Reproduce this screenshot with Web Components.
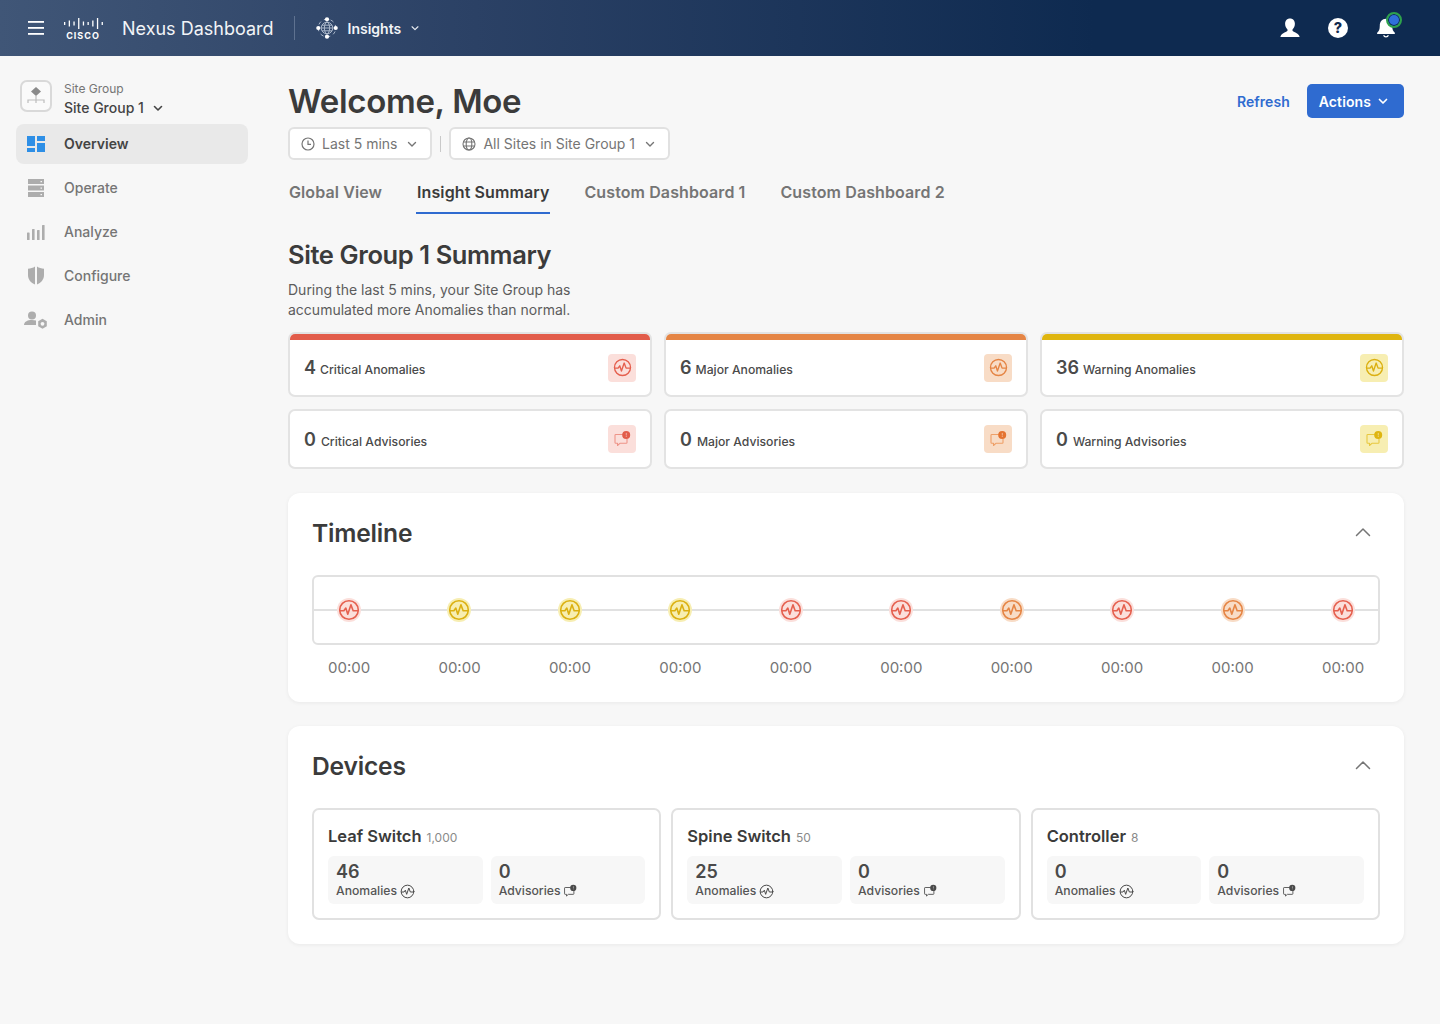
<!DOCTYPE html>
<html lang="en">
<head>
<meta charset="utf-8">
<title>Nexus Dashboard</title>
<style>
  html, body { margin: 0; padding: 0; }
  body {
    width: 1440px;
    min-height: 1024px;
    background: #f7f7f7;
    font-family: Inter, "Liberation Sans", sans-serif;
    color: #444;
  }
  .shell { display: flex; align-items: flex-start; }
</style>
</head>
<body>
<nx-topbar></nx-topbar>
<div class="shell">
  <nx-sidebar></nx-sidebar>
  <nx-main></nx-main>
</div>

<script>
const chevron = (size, color, sw = 1.6) => `<svg width="${size}" height="${size}" viewBox="0 0 12 12" fill="none" stroke="${color}" stroke-width="${sw}" stroke-linecap="round" stroke-linejoin="round"><path d="M2.5 4.5 6 8l3.5-3.5"/></svg>`;

const anomalyIcon = (size, color, fill = 'none', sw = 1.5) => `<svg width="${size}" height="${size}" viewBox="0 0 18 18" fill="${fill}" stroke="${color}" stroke-width="${sw}" stroke-linejoin="round" stroke-linecap="round"><circle cx="9" cy="9" r="7.6"/><path d="M1.6 9.6H4.800L6.400 7.400 8 12.400 10.600 4.800 12.400 9.600H16.400"/></svg>`;

const advisoryIcon = (size, color, dot) => `<svg width="${size}" height="${size}" viewBox="0 0 18 18" fill="none"><path d="M10 4.5H2.800a.8.8 0 0 0-.8.8v7.200a.8.8 0 0 0 .8.8h1.700v2.200l2.400-2.200h6.300a.8.8 0 0 0 .8-.8V9" stroke="${color}" stroke-width="1.100" stroke-linejoin="round"/><circle cx="13.200" cy="5" r="4" fill="${dot}"/><rect x="12.800" y="2.900" width=".9" height="2.600" fill="#fff" opacity=".55"/><rect x="12.800" y="6" width=".9" height=".9" fill="#fff" opacity=".55"/></svg>`;

class NxTopbar extends HTMLElement {
  constructor() {
    super();
    this.attachShadow({ mode: 'open' });
    const heights = [3, 6, 4, 11, 4, 3, 6, 11, 3];
    const bars = heights.map((h, i) => `<rect x="${i * 4.7}" y="${5.5 - h / 2}" width="1.300" height="${h}"/>`).join('');
    this.shadowRoot.innerHTML = `
      <style>
        :host {
          display: flex;
          align-items: center;
          height: 56px;
          background: linear-gradient(90deg, #405677 0%, #2b4165 33%, #0e2a50 76%);
          color: #fff;
          font-family: Inter, "Liberation Sans", sans-serif;
        }
        .menu { margin-left: 28px; display: flex; }
        .logo { margin-left: 20px; display: flex; flex-direction: column; align-items: center; width: 38px; padding-top: 2px; }
        .logo svg { display: block; }
        .logo span { font-size: 9px; font-weight: 700; letter-spacing: 1px; line-height: 10px; margin-top: 2px; }
        .name { margin-left: 20px; font-size: 18px; font-weight: 400; color: #f2f4f7; }
        .sep { width: 1px; height: 24px; margin-left: 20px; background: #5f7290; }
        .app { margin-left: 21px; display: flex; align-items: center; }
        .app b { margin-left: 10px; font-size: 14px; font-weight: 600; color: #f2f4f7; }
        .app svg:last-child { margin-left: 9px; }
        .right { margin-left: auto; margin-right: 42px; display: flex; align-items: center; gap: 24px; }
        .right svg { display: block; }
        .bell { position: relative; display: flex; }
        .bell i {
          position: absolute; left: 12px; top: -4px;
          width: 16px; height: 16px; box-sizing: border-box; border-radius: 50%;
          background: #2f6fdb; border: 2.500px solid #2ea24c;
          box-shadow: inset 0 0 0 1px #0e2a50;
        }
      </style>
      <span class="menu"><svg width="16" height="14" viewBox="0 0 16 14" fill="#fff"><rect y="0" width="16" height="1.800"/><rect y="6" width="16" height="1.800"/><rect y="12" width="16" height="1.800"/></svg></span>
      <div class="logo">
        <svg width="39" height="11" viewBox="0 0 39 11" fill="#fff">${bars}</svg>
        <span>CISCO</span>
      </div>
      <span class="name">Nexus Dashboard</span>
      <span class="sep"></span>
      <div class="app">
        <svg width="22" height="22" viewBox="0 0 22 22" fill="none" stroke="#a9b6c9" stroke-width="1">
          <circle cx="11" cy="11" r="8.800" stroke-dasharray="3.500 3.400" stroke-dashoffset="-3.500"/>
          <circle cx="11" cy="11" r="5.800"/><ellipse cx="11" cy="11" rx="2.600" ry="5.800"/><path d="M5.200 11h11.600M6 8.200h10M6 13.800h10"/>
          <g fill="#fff" stroke="none"><circle cx="11" cy="2.300" r="2.100"/><circle cx="11" cy="19.700" r="2.100"/><circle cx="2.300" cy="11" r="2.100"/><circle cx="19.700" cy="11" r="2.100"/></g>
        </svg>
        <b>Insights</b>
        ${chevron(10, '#e8ecf2', 1.400)}
      </div>
      <div class="right">
        <svg width="24" height="24" viewBox="0 0 24 24" fill="#fff"><path d="M12 2.500c3 0 4.900 2.200 4.900 5.300 0 2.400-1 4.400-2.400 5.700v1.300c0 .7 5.600 2.300 7 5.400.2.400 0 .8-.5.8H3c-.5 0-.7-.4-.5-.8 1.400-3.100 7-4.700 7-5.400v-1.300C8.100 12.200 7.100 10.200 7.100 7.800c0-3.100 1.900-5.300 4.900-5.300z"/></svg>
        <svg width="24" height="24" viewBox="0 0 24 24"><circle cx="12" cy="12" r="10" fill="#fff"/><text x="12" y="17" text-anchor="middle" font-family="Inter, sans-serif" font-size="14.500" font-weight="800" fill="#12294d">?</text></svg>
        <span class="bell">
          <svg width="24" height="24" viewBox="0 0 24 24" fill="#fff"><path d="M12 2.800c4 0 6.200 3 6.200 6.800 0 4.100 1 5.900 2.600 7.200.5.400.2 1.200-.5 1.200H3.700c-.7 0-1-.8-.5-1.200 1.600-1.300 2.600-3.100 2.600-7.200C5.800 5.800 8 2.800 12 2.800z"/><path d="M9 19.200h1.500a1.600 1.600 0 0 0 3 0H15a3.100 3.100 0 0 1-6 0z"/></svg>
          <i></i>
        </span>
      </div>
    `;
  }
}
customElements.define('nx-topbar', NxTopbar);

class NxSideItem extends HTMLElement {
  constructor() {
    super();
    this.attachShadow({ mode: 'open' });
    this.shadowRoot.innerHTML = `
      <style>
        :host {
          display: flex;
          align-items: center;
          height: 40px;
          box-sizing: border-box;
          padding-bottom: 1px;
          border-radius: 8px;
          font-size: 14px;
          font-weight: 500;
          color: #757575;
        }
        :host([active]) { background: #e9e9e9; color: #444; font-weight: 600; }
        .ico { width: 40px; margin-right: 8px; display: flex; justify-content: center; }
      </style>
      <span class="ico"><slot name="icon"></slot></span>
      <slot></slot>
    `;
  }
}
customElements.define('nx-side-item', NxSideItem);

class NxSidebar extends HTMLElement {
  constructor() {
    super();
    this.attachShadow({ mode: 'open' });
    this.shadowRoot.innerHTML = `
      <style>
        :host {
          display: block;
          width: 232px;
          flex: none;
          padding: 24px 0 0 16px;
          margin-right: 40px;
          font-family: Inter, "Liberation Sans", sans-serif;
        }
        .group { display: flex; align-items: flex-start; height: 44px; }
        .box {
          margin-left: 4px; width: 32px; height: 32px; box-sizing: border-box;
          border: 2px solid #d9d9d9; border-radius: 7px; background: #fafafa;
          display: flex; align-items: center; justify-content: center;
        }
        .text { margin: 0 0 0 12px; }
        .small { font-size: 12px; line-height: 18px; color: #757575; }
        .big { font-size: 14px; line-height: 20px; font-weight: 500; color: #444; display: flex; align-items: center; gap: 8px; }
        nav { display: flex; flex-direction: column; gap: 4px; }
        svg { display: block; }
      </style>
      <div class="group">
        <span class="box">
          <svg width="22" height="22" viewBox="0 0 22 22" fill="none"><path d="M11 2 16 6.500 11 11 6 6.500z" fill="#8a8a8a"/><path d="M11 11v7M3 18v-3h16v3" stroke="#bdbdbd" stroke-width="1.200"/></svg>
        </span>
        <div class="text">
          <div class="small">Site Group</div>
          <div class="big">Site Group 1 ${chevron(12, '#444', 1.600)}</div>
        </div>
      </div>
      <nav>
        <nx-side-item active>
          <svg slot="icon" width="18" height="16" viewBox="0 0 18 16" fill="#2e8fe6"><rect width="8" height="10"/><rect y="12" width="8" height="4"/><rect x="10" width="8" height="5"/><rect x="10" y="7" width="8" height="9"/></svg>
          Overview
        </nx-side-item>
        <nx-side-item>
          <svg slot="icon" width="16" height="18" viewBox="0 0 16 18" fill="#adadad"><rect width="16" height="5"/><rect y="6.500" width="16" height="5"/><rect y="13" width="16" height="5"/><g fill="#f7f7f7"><rect x="12.500" y="2" width="1.500" height="1.200"/><rect x="12.500" y="8.500" width="1.500" height="1.200"/><rect x="12.500" y="15" width="1.500" height="1.200"/></g></svg>
          Operate
        </nx-side-item>
        <nx-side-item>
          <svg slot="icon" width="18" height="16" viewBox="0 0 18 16" fill="#adadad"><rect y="8.500" width="2.600" height="7.500" rx=".6"/><rect x="5" y="5" width="2.600" height="11" rx=".6"/><rect x="10" y="6" width="2.600" height="10" rx=".6"/><rect x="15" y="1" width="2.600" height="15" rx=".6"/></svg>
          Analyze
        </nx-side-item>
        <nx-side-item>
          <svg slot="icon" width="16" height="19" viewBox="0 0 16 19" fill="#adadad"><path d="M7 .5v18C3 17 0 13.500 0 9V2.800C2.500 2.600 5 1.800 7 .5zM9 .5c2 1.300 4.500 2.100 7 2.300V9c0 4.500-3 8-7 9.500z"/></svg>
          Configure
        </nx-side-item>
        <nx-side-item>
          <svg slot="icon" width="24" height="18" viewBox="0 0 24 18" fill="#adadad"><circle cx="8" cy="4.500" r="4"/><path d="M0 14c0-3 3-5 8-5 1.500 0 2.800.2 4 .6V14z"/><path d="M18.500 7.800l4.300 2.500v4.900l-4.300 2.500-4.300-2.500v-4.900z"/><circle cx="18.500" cy="12.800" r="1.900" fill="#f7f7f7"/></svg>
          Admin
        </nx-side-item>
      </nav>
    `;
  }
}
customElements.define('nx-sidebar', NxSidebar);

class NxSelect extends HTMLElement {
  constructor() {
    super();
    this.attachShadow({ mode: 'open' });
    this.shadowRoot.innerHTML = `
      <style>
        :host {
          display: inline-flex;
          align-items: center;
          height: 33px;
          box-sizing: border-box;
          padding: 0 12px 0 11px;
          background: #fff;
          border: 2px solid #e1e1e1;
          border-radius: 6px;
          font-size: 14px;
          color: #757575;
        }
        .ico { display: flex; margin-right: 7px; }
        .arrow { display: flex; margin-left: 9px; }
      </style>
      <span class="ico"><slot name="icon"></slot></span>
      <slot></slot>
      <span class="arrow">${chevron(12, '#757575', 1.400)}</span>
    `;
  }
}
customElements.define('nx-select', NxSelect);

class NxTabs extends HTMLElement {
  constructor() {
    super();
    this.attachShadow({ mode: 'open' });
    const active = this.getAttribute('active');
    const tabs = (this.getAttribute('tabs') || '').split('|');
    this.shadowRoot.innerHTML = `
      <style>
        :host { display: flex; gap: 35px; margin-top: 14px; padding-left: 1px; }
        span {
          display: block; height: 40px; line-height: 37px; box-sizing: border-box;
          font-size: 16px; font-weight: 600; color: #757575; white-space: nowrap; letter-spacing: .1px;
        }
        span.on { color: #3b3b3b; border-bottom: 2px solid #2f6bd0; padding: 0 1px; margin: 0 -1px; }
      </style>
      ${tabs.map(t => `<span class="${t === active ? 'on' : ''}">${t}</span>`).join('')}
    `;
  }
}
customElements.define('nx-tabs', NxTabs);

const TONES = {
  critical: { bar: '#e25c4a', tile: '#fbdfdb', line: '#e5604f', dot: '#e25c4a', soft: '#ee9488', halo: '#fbdfdb' },
  major: { bar: '#e58545', tile: '#f8dcc6', line: '#e58545', dot: '#e5732f', soft: '#ee9f67', halo: '#f8dcc6' },
  warning: { bar: '#dfb50f', tile: '#f7eeb2', line: '#dbb011', dot: '#dfb50f', soft: '#e8c83f', halo: '#f7eeb2' }
};

class NxStatCard extends HTMLElement {
  constructor() {
    super();
    this.attachShadow({ mode: 'open' });
    const tone = TONES[this.getAttribute('tone')];
    const isAnomaly = this.getAttribute('kind') === 'anomaly';
    this.shadowRoot.innerHTML = `
      <style>
        :host {
          display: flex;
          align-items: center;
          box-sizing: border-box;
          height: ${isAnomaly ? 65 : 60}px;
          background: #fff;
          border: 2px solid #e3e3e3;
          border-radius: 7px;
          overflow: hidden;
          padding: ${isAnomaly ? '6px' : '0'} 14px 0 14px;
          position: relative;
        }
        .bar { position: absolute; left: 0; right: 0; top: 0; height: 6px; background: ${tone.bar}; }
        .num { font-size: 18px; font-weight: 600; color: #4a4a4a; margin-right: ${isAnomaly ? 4 : 5}px; }
        .label { font-size: 12.200px; font-weight: 500; color: #4a4a4a; padding-top: 4px; }
        .tile {
          margin-left: auto; width: 28px; height: 28px; border-radius: 4px;
          background: ${tone.tile}; display: flex; align-items: center; justify-content: center;
        }
      </style>
      ${isAnomaly ? '<span class="bar"></span>' : ''}
      <span class="num">${this.getAttribute('value')}</span>
      <span class="label"><slot></slot></span>
      <span class="tile">${isAnomaly ? anomalyIcon(19, tone.line, 'none', 1.300) : advisoryIcon(18, tone.soft, tone.dot)}</span>
    `;
  }
}
customElements.define('nx-stat-card', NxStatCard);

class NxPanel extends HTMLElement {
  constructor() {
    super();
    this.attachShadow({ mode: 'open' });
    this.shadowRoot.innerHTML = `
      <style>
        :host {
          display: block;
          box-sizing: border-box;
          background: #fff;
          border-radius: 12px;
          box-shadow: 0 1px 4px rgba(0, 0, 0, .06);
          padding: 24px;
        }
        header { display: flex; align-items: center; justify-content: space-between; height: 32px; margin-bottom: 26px; }
        h2 { margin: 0; font-size: 24.600px; font-weight: 600; color: #3b3b3b; letter-spacing: -.2px; }
        svg { display: block; margin: -2px 9px 0 0; }
      </style>
      <header>
        <h2>${this.getAttribute('heading')}</h2>
        <svg width="16" height="10" viewBox="0 0 16 10" fill="none" stroke="#757575" stroke-width="1.500" stroke-linecap="round" stroke-linejoin="round"><path d="M1.500 8.500 8 2l6.500 6.500"/></svg>
      </header>
      <slot></slot>
    `;
  }
}
customElements.define('nx-panel', NxPanel);

class NxTimeline extends HTMLElement {
  constructor() {
    super();
    this.attachShadow({ mode: 'open' });
    const tones = this.getAttribute('tones').split(',');
    this.shadowRoot.innerHTML = `
      <style>
        :host { display: block; }
        .track {
          position: relative;
          display: flex; justify-content: space-between; align-items: center;
          height: 70px; box-sizing: border-box; padding: 0 14px;
          border: 2px solid #e1e1e1; border-radius: 6px;
        }
        .track::before {
          content: ''; position: absolute; left: 0; right: 0; top: 32px; height: 2px; background: #e1e1e1;
        }
        .slot { position: relative; width: 42px; display: flex; justify-content: center; }
        .node {
          width: 24px; height: 24px; border-radius: 50%;
          display: flex; align-items: center; justify-content: center;
        }
        .labels { display: flex; justify-content: space-between; padding: 13px 16px 0; }
        .labels span { width: 42px; text-align: center; font-size: 15px; line-height: 20px; color: #757575; white-space: nowrap; }
      </style>
      <div class="track">
        ${tones.map(t => `<span class="slot"><span class="node" style="background:${TONES[t].halo}">${anomalyIcon(22, TONES[t].line, 'none', 1.300)}</span></span>`).join('')}
      </div>
      <div class="labels">${tones.map(() => '<span>00:00</span>').join('')}</div>
    `;
  }
}
customElements.define('nx-timeline', NxTimeline);

class NxDeviceCard extends HTMLElement {
  constructor() {
    super();
    this.attachShadow({ mode: 'open' });
    const a = this.getAttribute('anomalies');
    const b = this.getAttribute('advisories');
    this.shadowRoot.innerHTML = `
      <style>
        :host {
          display: block;
          box-sizing: border-box;
          height: 112px;
          padding: 14px;
          border: 2px solid #e1e1e1;
          border-radius: 7px;
          background: #fff;
        }
        .head { height: 24px; display: flex; align-items: baseline; gap: 5px; line-height: 24px; color: #3b3b3b; }
        .head b { font-size: 16.500px; font-weight: 600; }
        .head span { font-size: 12px; color: #8a8a8a; }
        .tiles { display: grid; grid-template-columns: 1fr 1fr; gap: 8px; margin-top: 8px; }
        .tile { height: 48px; box-sizing: border-box; background: #f7f7f7; border-radius: 6px; padding: 5px 8px 0; }
        .n { font-size: 18px; font-weight: 600; line-height: 22px; color: #4a4a4a; }
        .l { display: flex; align-items: center; gap: 3px; font-size: 12.200px; line-height: 16px; font-weight: 500; color: #555; }
        .l svg { display: block; }
      </style>
      <div class="head"><b>${this.getAttribute('name')}</b><span>${this.getAttribute('count')}</span></div>
      <div class="tiles">
        <div class="tile"><div class="n">${a}</div><div class="l">Anomalies ${anomalyIcon(15, '#4a4a4a', 'none', 1.200)}</div></div>
        <div class="tile"><div class="n">${b}</div><div class="l">Advisories ${advisoryIcon(14, '#4a4a4a', '#4a4a4a')}</div></div>
      </div>
    `;
  }
}
customElements.define('nx-device-card', NxDeviceCard);

class NxMain extends HTMLElement {
  constructor() {
    super();
    this.attachShadow({ mode: 'open' });
    this.shadowRoot.innerHTML = `
      <style>
        :host {
          display: block;
          width: 1116px;
          flex: none;
          padding-top: 28px;
          font-family: Inter, "Liberation Sans", sans-serif;
          color: #444;
        }
        .top { display: flex; align-items: flex-start; justify-content: space-between; height: 43px; }
        h1 { margin: -1px 0 0; font-size: 33px; line-height: 36px; font-weight: 600; color: #3b3b3b; letter-spacing: -.3px; }
        .actions { display: flex; align-items: center; gap: 17px; }
        .refresh { font-size: 14px; font-weight: 600; color: #2f6bd0; letter-spacing: .05px; }
        .btn {
          height: 34px; box-sizing: border-box; padding: 0 15px 0 12px;
          display: flex; align-items: center; gap: 6px; letter-spacing: .1px;
          background: #2f6bd0; border-radius: 5px; color: #fff; font-size: 14px; font-weight: 600;
        }
        .filters { display: flex; align-items: center; }
        .filters i { width: 1px; height: 16px; background: #c9c9c9; margin: 0 8px; }
        svg { display: block; }
        h3 { margin: 23px 0 0; font-size: 25.500px; line-height: 36px; font-weight: 600; color: #3b3b3b; letter-spacing: -.4px; }
        p { margin: 7px 0 0; font-size: 14px; line-height: 20px; color: #5c5c5c; }
        .stats { display: grid; grid-template-columns: repeat(3, 1fr); gap: 12px; margin-top: 12px; }
        .timeline { margin-top: 24px; height: 209px; }
        .devices { margin-top: 24px; height: 218px; }
        .device-row { display: grid; grid-template-columns: repeat(3, 1fr); gap: 10px; }
      </style>
      <div class="top">
        <h1>Welcome, Moe</h1>
        <div class="actions">
          <span class="refresh">Refresh</span>
          <span class="btn">Actions ${chevron(12, '#fff', 1.700)}</span>
        </div>
      </div>
      <div class="filters">
        <nx-select>
          <svg slot="icon" width="14" height="14" viewBox="0 0 14 14" fill="none" stroke="#757575" stroke-width="1.200"><circle cx="7" cy="7" r="6"/><path d="M7 3.500V7.300H10"/></svg>
          Last 5 mins
        </nx-select>
        <i></i>
        <nx-select>
          <svg slot="icon" width="14" height="14" viewBox="0 0 14 14" fill="none" stroke="#757575" stroke-width="1.100"><circle cx="7" cy="7" r="6"/><ellipse cx="7" cy="7" rx="2.800" ry="6"/><path d="M1.300 5h11.400M1.300 9h11.400"/></svg>
          All Sites in Site Group 1
        </nx-select>
      </div>
      <nx-tabs active="Insight Summary" tabs="Global View|Insight Summary|Custom Dashboard 1|Custom Dashboard 2"></nx-tabs>
      <h3>Site Group 1 Summary</h3>
      <p>During the last 5 mins, your Site Group has<br>accumulated more Anomalies than normal.</p>
      <div class="stats">
        <nx-stat-card tone="critical" kind="anomaly" value="4">Critical Anomalies</nx-stat-card>
        <nx-stat-card tone="major" kind="anomaly" value="6">Major Anomalies</nx-stat-card>
        <nx-stat-card tone="warning" kind="anomaly" value="36">Warning Anomalies</nx-stat-card>
        <nx-stat-card tone="critical" kind="advisory" value="0">Critical Advisories</nx-stat-card>
        <nx-stat-card tone="major" kind="advisory" value="0">Major Advisories</nx-stat-card>
        <nx-stat-card tone="warning" kind="advisory" value="0">Warning Advisories</nx-stat-card>
      </div>
      <nx-panel class="timeline" heading="Timeline">
        <nx-timeline tones="critical,warning,warning,warning,critical,critical,major,critical,major,critical"></nx-timeline>
      </nx-panel>
      <nx-panel class="devices" heading="Devices">
        <div class="device-row">
          <nx-device-card name="Leaf Switch" count="1,000" anomalies="46" advisories="0"></nx-device-card>
          <nx-device-card name="Spine Switch" count="50" anomalies="25" advisories="0"></nx-device-card>
          <nx-device-card name="Controller" count="8" anomalies="0" advisories="0"></nx-device-card>
        </div>
      </nx-panel>
    `;
  }
}
customElements.define('nx-main', NxMain);
</script>
</body>
</html>
